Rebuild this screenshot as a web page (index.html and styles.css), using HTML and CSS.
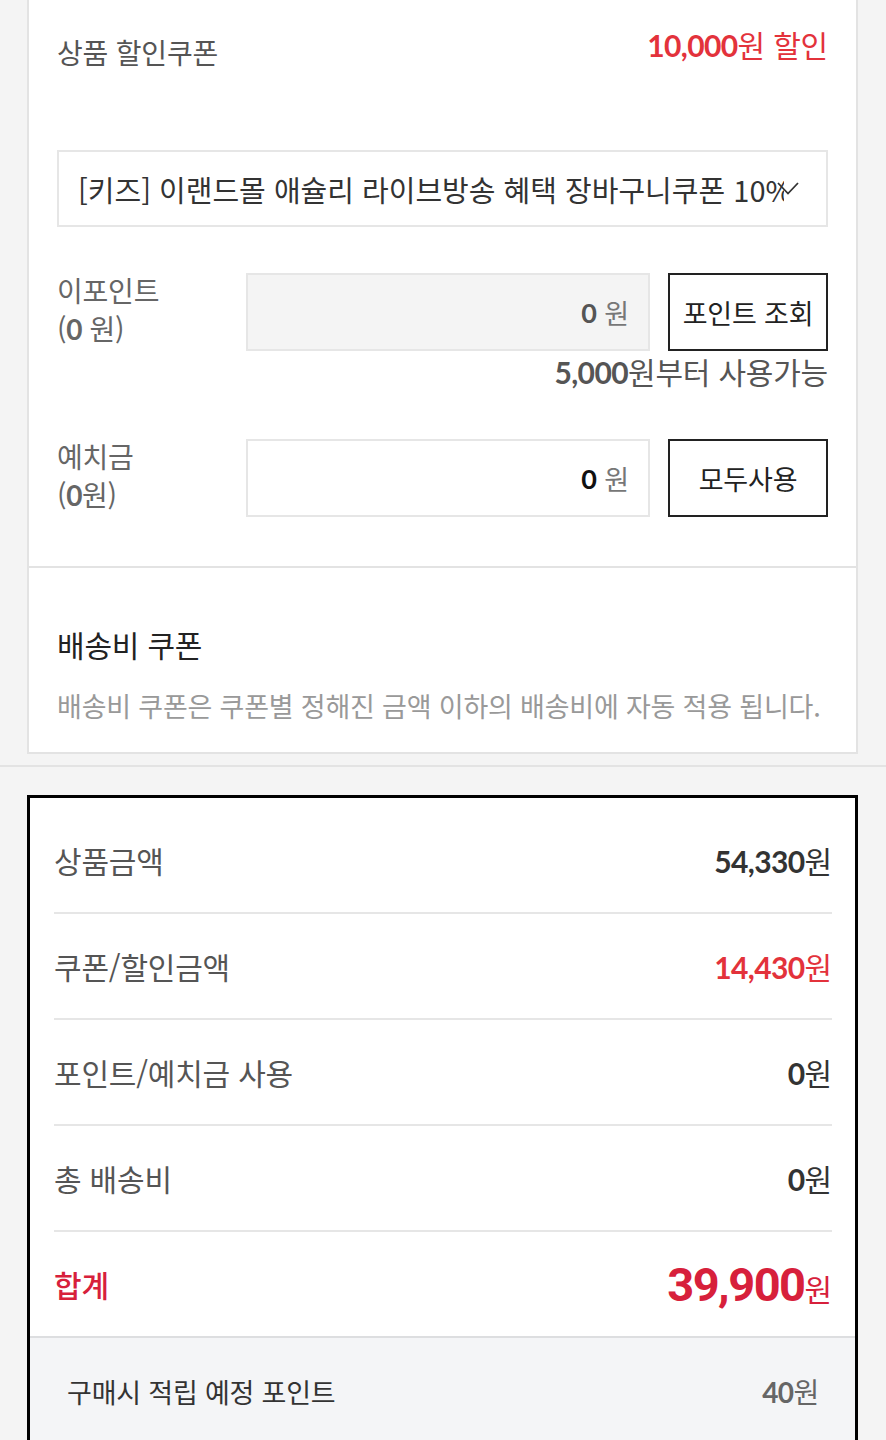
FILE: index.html
```html
<!DOCTYPE html>
<html lang="ko">
<head>
    <meta charset="utf-8">
    <title>주문서 - 할인/결제금액</title>
    <link rel="stylesheet" href="styles.css">
</head>
<body>
    <div class="card">
        <div class="coupon-sec">
            <div class="coupon-head">
                <span class="coupon-title">상품 할인쿠폰</span>
                <span class="coupon-amount"><b class="num">10,000</b>원 할인</span>
            </div>

            <div class="select-box">
                <span class="select-text">[키즈] 이랜드몰 애슐리 라이브방송 혜택 장바구니쿠폰 10%</span>
                <svg class="chevron" width="22" height="13" viewBox="0 0 22 13">
                    <path d="M1 1 L11 11.5 L21 1" fill="none" stroke="#333" stroke-width="1.8"/>
                </svg>
            </div>

            <div class="pay-row first">
                <div class="pay-label">이포인트<br>(<b class="num">0</b> 원)</div>
                <div class="pay-input disabled"><b class="num">0</b> 원</div>
                <button type="button" class="pay-btn">포인트 조회</button>
            </div>
            <p class="pay-note"><b class="num">5,000</b>원부터 사용가능</p>

            <div class="pay-row">
                <div class="pay-label">예치금<br>(<b class="num">0</b>원)</div>
                <div class="pay-input"><b class="num">0</b> 원</div>
                <button type="button" class="pay-btn">모두사용</button>
            </div>
        </div>

        <div class="ship-sec">
            <h3 class="ship-title">배송비 쿠폰</h3>
            <p class="ship-desc">배송비 쿠폰은 쿠폰별 정해진 금액 이하의 배송비에 자동 적용 됩니다.</p>
        </div>
    </div>

    <div class="split-line"></div>

    <div class="summary">
        <div class="sum-rows">
            <div class="sum-row">
                <span class="sum-label">상품금액</span>
                <span class="sum-value"><b class="num">54,330</b>원</span>
            </div>
            <div class="sum-row">
                <span class="sum-label">쿠폰/할인금액</span>
                <span class="sum-value red"><b class="num">14,430</b>원</span>
            </div>
            <div class="sum-row">
                <span class="sum-label">포인트/예치금 사용</span>
                <span class="sum-value"><b class="num">0</b>원</span>
            </div>
            <div class="sum-row">
                <span class="sum-label">총 배송비</span>
                <span class="sum-value"><b class="num">0</b>원</span>
            </div>
            <div class="sum-row total">
                <span class="sum-label">합계</span>
                <span class="sum-value"><b class="total-num">39,900</b>원</span>
            </div>
        </div>
        <div class="save-point">
            <span class="save-label">구매시 적립 예정 포인트</span>
            <span class="save-value"><b class="num">40</b>원</span>
        </div>
    </div>
</body>
</html>
```

FILE: styles.css
```css
/* order page - discount & payment summary */
body {
    margin: 0;
    background: #f4f4f4;
    font-family: "Noto Sans CJK KR", "Noto Sans", sans-serif;
    font-size: 27px;
    letter-spacing: -0.2px;
    color: #555;
}

.num {
    font-family: "Lato", "Noto Sans CJK KR", sans-serif;
    font-weight: 700;
    letter-spacing: -0.6px;
}

.card {
    margin: 0 28px 0 27px;
    background: #fff;
    border: 2px solid #e3e3e3;
    border-top: none;
}

.coupon-sec {
    padding: 24px 28px 49px;
    border-bottom: 2px solid #e3e3e3;
}

.coupon-head {
    display: flex;
    justify-content: space-between;
    align-items: flex-start;
    height: 48px;
}

.coupon-title {
    padding-top: 8px;
    line-height: 40px;
    font-size: 28px;
}

.coupon-amount {
    line-height: 40px;
    font-size: 30px;
    color: #e3323b;
}

.select-box {
    position: relative;
    display: flex;
    align-items: center;
    margin-top: 78px;
    height: 73px;
    padding: 0 42px 0 19px;
    border: 2px solid #e6e6e6;
    font-size: 29px;
    letter-spacing: 0;
    color: #333;
}

.select-text {
    flex: 1;
    overflow: hidden;
    white-space: nowrap;
    line-height: 40px;
}

.chevron {
    position: absolute;
    right: 27px;
    top: 30px;
}

.pay-row {
    display: flex;
    margin-top: 47px;
    height: 78px;
}

.pay-row.first {
    margin-top: 46px;
}

.pay-label {
    width: 189px;
    margin-top: -2px;
    line-height: 38px;
    font-size: 28px;
    color: #666;
}

.pay-input {
    flex: 1;
    display: flex;
    align-items: center;
    justify-content: flex-end;
    gap: 8px;
    padding-right: 19px;
    background: #fff;
    border: 2px solid #e6e6e6;
    color: #777;
}

.pay-input .num {
    color: #111;
}

.pay-input.disabled {
    background: #f4f4f4;
}

.pay-input.disabled .num {
    color: #555;
}

.pay-btn {
    width: 160px;
    margin-left: 18px;
    background: #fff;
    border: 2px solid #222;
    border-radius: 0;
    font-family: inherit;
    font-size: 27px;
    letter-spacing: -0.2px;
    color: #222;
    padding: 0;
}

.pay-note {
    margin: 0;
    text-align: right;
    line-height: 40px;
    font-size: 30px;
}

.ship-sec {
    padding: 56px 28px 26px;
}

.ship-title {
    margin: 0;
    font-size: 30px;
    font-weight: 400;
    line-height: 40px;
    color: #222;
}

.ship-desc {
    margin: 22px 0 0;
    line-height: 40px;
    color: #999;
}

.split-line {
    margin-top: 11px;
    height: 2px;
    background: #e3e3e3;
}

.summary {
    margin: 28px 28px 0 27px;
    background: #fff;
    border: 3px solid #000;
    border-bottom: none;
}

.sum-rows {
    padding: 10px 23px 0 24px;
}

.sum-row {
    display: flex;
    justify-content: space-between;
    align-items: center;
    height: 104px;
    border-bottom: 2px solid #e6e6e6;
}

.sum-label {
    font-size: 30px;
    color: #555;
}

.sum-value {
    font-size: 30px;
    color: #333;
}

.sum-value.red {
    color: #e3323b;
}

.sum-row.total {
    border-bottom: none;
}

.sum-row.total .sum-label {
    font-weight: 500;
    color: #d7203b;
}

.sum-row.total .sum-value {
    color: #d7203b;
}

.total-num {
    font-family: "Roboto", "Liberation Sans", sans-serif;
    font-size: 47px;
    font-weight: 700;
    letter-spacing: -1.5px;
}

.save-point {
    display: flex;
    justify-content: space-between;
    align-items: center;
    height: 106px;
    padding: 0 36px 0 37px;
    background: #f4f5f7;
    border-top: 2px solid #dddee0;
}

.save-label {
    font-size: 27px;
    color: #333;
}

.save-value {
    font-size: 28px;
    color: #666;
}
```
